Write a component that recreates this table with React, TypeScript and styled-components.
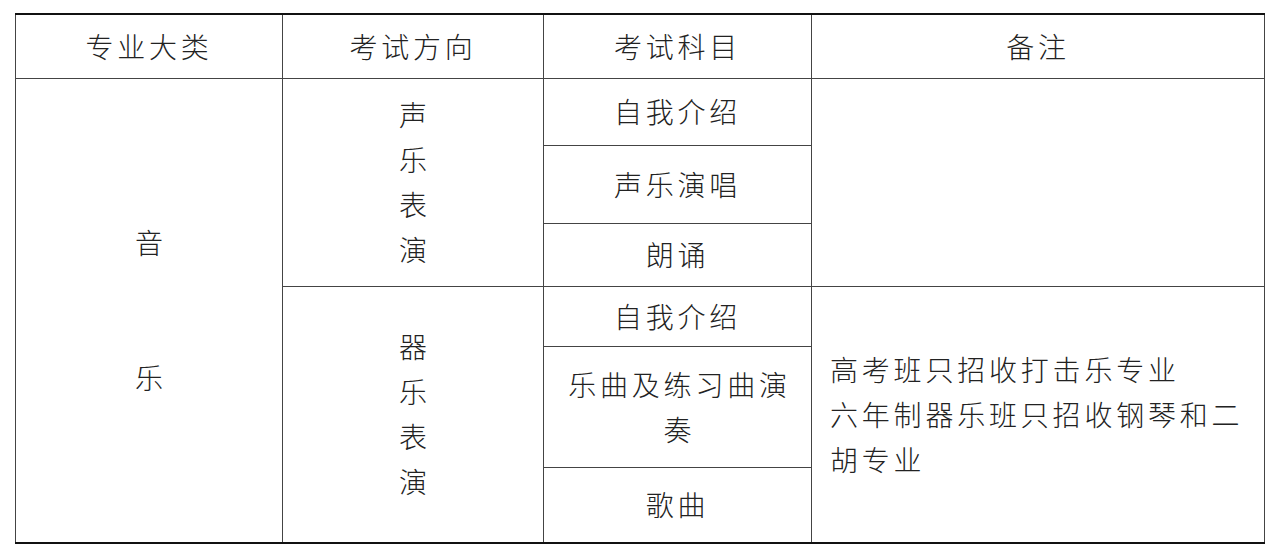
import React from "react";
import styled, { createGlobalStyle } from "styled-components";

const GlobalStyle = createGlobalStyle`
  html, body {
    margin: 0;
    padding: 0;
    background: #fff;
  }
  body {
    font-family: "Noto Sans CJK SC", "Noto Sans", sans-serif;
    color: #222;
  }
`;

const Page = styled.div`
  padding: 13px 0 0 15px;
`;

const Table = styled.table`
  width: 1249px;
  table-layout: fixed;
  border-collapse: collapse;
  border-top: 2px solid #111;
  border-bottom: 2px solid #111;
  border-left: 1.5px solid #222;
  border-right: 1.5px solid #777;
  font-size: 28px;
  font-weight: 300;
  letter-spacing: 3.8px;
`;

const Row = styled.tr<{ $h: number }>`
  height: ${(p) => p.$h}px;
`;

const Cell = styled.td<{ $align?: "left" | "center" }>`
  border: 1px solid #444;
  padding: ${(p) => (p.$align === "left" ? "0 0 0 18px" : "0")};
  text-align: ${(p) => p.$align ?? "center"};
  vertical-align: middle;
  line-height: 45px;
  white-space: nowrap;
`;

const HeadCell = styled(Cell).attrs({ as: "th" })`
  font-weight: 300;
`;

const Stack = styled.div<{ $gap?: number }>`
  display: flex;
  flex-direction: column;
  align-items: center;
  gap: ${(p) => p.$gap ?? 0}px;
`;

const Line = styled.span`
  display: block;
  margin-right: -4px;
`;

const LeftLine = styled.span`
  display: block;
`;

const Vertical: React.FC<{ text: string; gap?: number }> = ({ text, gap }) => (
  <Stack $gap={gap}>
    {text.split("").map((c, i) => (
      <Line key={i}>{c}</Line>
    ))}
  </Stack>
);

export default function App() {
  return (
    <Page>
      <GlobalStyle />
      <Table>
        <colgroup>
          <col style={{ width: 267 }} />
          <col style={{ width: 261 }} />
          <col style={{ width: 268 }} />
          <col style={{ width: 453 }} />
        </colgroup>
        <thead>
          <Row $h={64}>
            <HeadCell>专业大类</HeadCell>
            <HeadCell>考试方向</HeadCell>
            <HeadCell>考试科目</HeadCell>
            <HeadCell>备注</HeadCell>
          </Row>
        </thead>
        <tbody>
          <Row $h={67}>
            <Cell rowSpan={6}>
              <Vertical text="音乐" gap={90} />
            </Cell>
            <Cell rowSpan={3}>
              <Vertical text="声乐表演" />
            </Cell>
            <Cell>自我介绍</Cell>
            <Cell rowSpan={3} />
          </Row>
          <Row $h={78}>
            <Cell>声乐演唱</Cell>
          </Row>
          <Row $h={63}>
            <Cell>朗诵</Cell>
          </Row>
          <Row $h={60}>
            <Cell rowSpan={3}>
              <Vertical text="器乐表演" />
            </Cell>
            <Cell>自我介绍</Cell>
            <Cell rowSpan={3} $align="left">
              <LeftLine>高考班只招收打击乐专业</LeftLine>
              <LeftLine>六年制器乐班只招收钢琴和二</LeftLine>
              <LeftLine>胡专业</LeftLine>
            </Cell>
          </Row>
          <Row $h={121}>
            <Cell>
              <Line>乐曲及练习曲演</Line>
              <Line>奏</Line>
            </Cell>
          </Row>
          <Row $h={76}>
            <Cell>歌曲</Cell>
          </Row>
        </tbody>
      </Table>
    </Page>
  );
}
